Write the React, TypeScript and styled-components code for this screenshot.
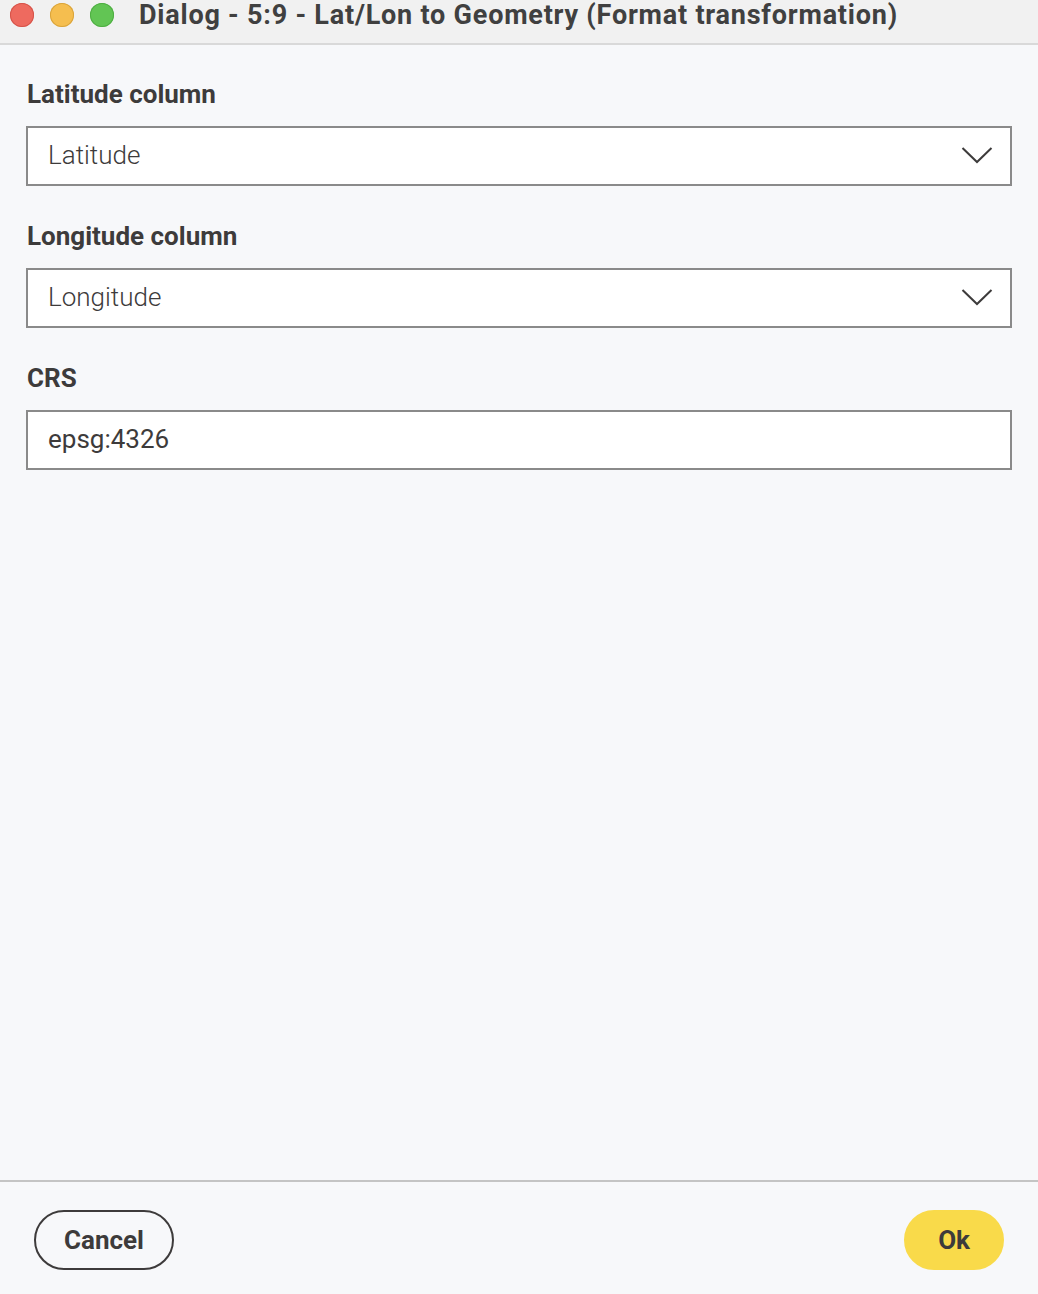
import { createGlobalStyle } from "styled-components";
import styled from "styled-components";

const GlobalStyle = createGlobalStyle`
  html, body {
    margin: 0;
    padding: 0;
    background: #f7f8fa;
  }
  #root {
    height: 1294px;
  }
`;

const Window = styled.div`
  width: 1038px;
  height: 1294px;
  display: flex;
  flex-direction: column;
  background: #f7f8fa;
  font-family: Roboto, "Liberation Sans", sans-serif;
  color: #3d3b3b;
`;

const TitleBar = styled.div`
  height: 45px;
  flex-shrink: 0;
  display: flex;
  align-items: center;
  padding: 0 0 0 10px;
  box-sizing: border-box;
  background: #f1f1f1;
  border-bottom: 2px solid #d9d9d9;
`;

const Lights = styled.div`
  display: flex;
  gap: 16px;
  margin-right: 25px;
  margin-top: -14px;
`;

const Light = styled.span<{ color: string; edge: string }>`
  width: 24px;
  height: 24px;
  border-radius: 50%;
  background: ${({ color }) => color};
  box-shadow: inset 0 0 0 1px ${({ edge }) => edge};
`;

const Title = styled.h1`
  margin: -13px 0 0;
  font-size: 27px;
  font-weight: 700;
  letter-spacing: 0.78px;
  color: #404040;
  white-space: nowrap;
`;

const Body = styled.div`
  flex: 1;
  padding: 35px 26px 0;
  display: flex;
  flex-direction: column;
  gap: 36px;
`;

const Field = styled.div`
  display: flex;
  flex-direction: column;
  gap: 18px;
`;

const Label = styled.label`
  font-size: 26px;
  font-weight: 700;
  line-height: 28px;
  color: #3d3b3b;
  padding-left: 1px;
`;

const Box = styled.div`
  height: 60px;
  box-sizing: border-box;
  background: #ffffff;
  border: 2px solid #8a8a8a;
  display: flex;
  align-items: center;
  justify-content: space-between;
  padding: 0 17px 2px 20px;
  font-size: 26px;
  color: #3d3b3b;
`;

const Value = styled.span<{ light?: boolean }>`
  font-weight: ${({ light }) => (light ? 300 : 400)};
`;

const Footer = styled.div`
  height: 114px;
  flex-shrink: 0;
  border-top: 2px solid #c4c4c4;
  display: flex;
  align-items: center;
  justify-content: space-between;
  padding: 0 34px 0 34px;
  box-sizing: border-box;
`;

const Button = styled.button<{ primary?: boolean }>`
  height: 60px;
  border-radius: 30px;
  font-family: Roboto, "Liberation Sans", sans-serif;
  font-size: 26px;
  font-weight: 700;
  color: #3d3b3b;
  cursor: pointer;
  padding: 0 ${({ primary }) => (primary ? "32px" : "28px")};
  background: ${({ primary }) => (primary ? "#f9da4a" : "transparent")};
  border: 2px solid ${({ primary }) => (primary ? "#f9da4a" : "#3d3b3b")};
  margin-top: 4px;
`;

const Chevron = () => (
  <svg width="32" height="18" viewBox="0 0 32 18" fill="none">
    <path d="M1.5 2 L16 16 L30.5 2" stroke="#3d3b3b" strokeWidth="2" />
  </svg>
);

const fields = [
  { label: "Latitude column", value: "Latitude", select: true },
  { label: "Longitude column", value: "Longitude", select: true },
  { label: "CRS", value: "epsg:4326", select: false },
];

export default function App() {
  return (
    <>
      <GlobalStyle />
      <Window>
        <TitleBar>
          <Lights>
            <Light color="#ee6a5f" edge="#d5544a" />
            <Light color="#f5be4f" edge="#d9a43c" />
            <Light color="#62c554" edge="#4fae43" />
          </Lights>
          <Title>Dialog - 5:9 - Lat/Lon to Geometry (Format transformation)</Title>
        </TitleBar>
        <Body>
          {fields.map((f) => (
            <Field key={f.label}>
              <Label>{f.label}</Label>
              <Box>
                <Value light={f.select}>{f.value}</Value>
                {f.select && <Chevron />}
              </Box>
            </Field>
          ))}
        </Body>
        <Footer>
          <Button>Cancel</Button>
          <Button primary>Ok</Button>
        </Footer>
      </Window>
    </>
  );
}
